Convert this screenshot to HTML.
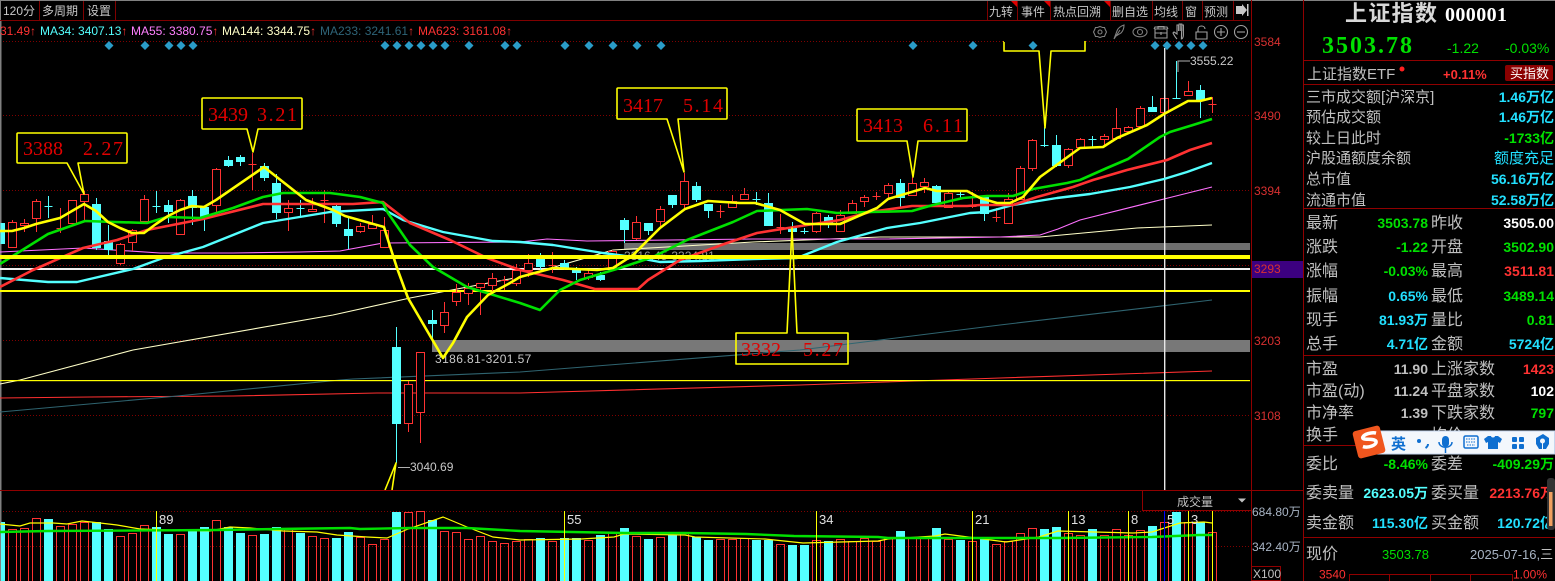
<!DOCTYPE html>
<html><head><meta charset="utf-8"><title>上证指数 000001</title>
<style>
html,body{margin:0;padding:0;background:#000;width:1555px;height:581px;overflow:hidden}
svg{display:block}
text{font-family:"Liberation Sans","WenQuanYi Zen Hei","Noto Sans CJK SC",sans-serif;white-space:pre}
.g{font-size:12px;fill:#c8c8c8}
.ax{font-size:12px;fill:#d83030}
.cb{font-family:"Liberation Serif","Noto Serif CJK SC",serif;font-size:20px;fill:#e00000}
.l{font-size:16px;fill:#c0c0c0}
.v{font-size:14px;font-weight:bold;text-anchor:end}
.c{fill:#22e0ff}.gn{fill:#00e000}.r{fill:#ff3232}.w{fill:#fff}.s{fill:#c0c0c0}
.n{font-size:13px;fill:#e0e0e0}
</style></head><body>
<svg width="1555" height="581" viewBox="0 0 1555 581" xmlns="http://www.w3.org/2000/svg">
<rect width="1555" height="581" fill="#000"/>
<!-- grid -->
<g stroke="#800000" stroke-width="1" stroke-dasharray="1 2" shape-rendering="crispEdges">
<path d="M0 41.5H1250M0 115.5H1250M0 190.5H1250M0 265.5H1250M0 340.5H1250M0 415.5H1250M0 511.5H1250M0 546.5H1250"/>
</g>
<rect x="0" y="0" width="1.5" height="581" fill="#808080"/>
<rect x="0" y="0" width="1555" height="1" fill="#808080"/>
<!-- gray bands -->
<rect x="624" y="243" width="626" height="7" fill="#6e6e6e"/>
<rect x="432" y="340" width="818" height="12" fill="#787878"/>
<text x="624" y="260" class="g" style="fill:#9a9a9a">3316.45-3324.81</text>
<text x="435" y="363" class="g" style="letter-spacing:.4px">3186.81-3201.57</text>
<!-- long MAs -->
<g fill="none" stroke-width="1.1">
<polyline stroke="#ff3030" points="0,398 90,397 233,396 377,393 520,393 800,385 1000,378 1212,371"/>
<polyline stroke="#2f6470" points="0,412 167,397 340,380 353,379 520,372 800,350 1000,325 1212,300"/>
<polyline stroke="#ffffc8" points="0,384 20,380 133,350 333,315 410,298 520,277 613,250 667,247 753,242 880,237 1040,237 1137,228 1212,225"/>
<polyline stroke="#ff70ff" points="0,252 83,248 160,253 233,253 300,252 340,251 383,243 520,242 547,239 587,241 753,239 887,239 1000,237 1040,235 1058,229 1080,220 1164,199 1212,187"/>
</g>
<!-- horizontal lines -->
<rect x="0" y="268" width="1250" height="2" fill="#f0f0f0"/>
<rect x="0" y="290" width="1250" height="2" fill="#ffff00"/>
<rect x="0" y="380" width="1250" height="1.2" fill="#ffff00"/>
<!-- candle wicks -->
<path fill="none" stroke="#ff3232" shape-rendering="crispEdges" d="M12.5 220V248M24.5 219V232M36.5 199V232M60.5 208V233M72.5 200V223M84.5 191V222M120.5 243V265M132.5 229V251M144.5 195V223M180.5 199V235M216.5 168V214M252.5 153V190M288.5 200V231M312.5 198V212M324.5 190V223M360.5 223V233M372.5 215V229M384.5 217V247M408.5 381V432M420.5 352V443M444.5 302V333M456.5 284V306M468.5 283V305M480.5 283V315M492.5 273V295M504.5 276V290M516.5 264V286M528.5 254V277M552.5 252V273M588.5 270V280M612.5 250V270M636.5 216V240M660.5 206V227M684.5 173V208M720.5 205V218M732.5 195V208M744.5 188V200M780.5 214V234M816.5 212V233M840.5 210V232M852.5 200V214M864.5 195V207M876.5 192V200M888.5 183V198M912.5 177V196M924.5 178V193M948.5 192V208M972.5 192V208M996.5 208V222M1008.5 193V224M1020.5 166V200M1032.5 139V171M1068.5 148V168M1080.5 138V148M1104.5 134V147M1116.5 108V140M1128.5 126V133M1140.5 106V127M1164.5 98V117M1188.5 81V95M1212.5 97V113"/>
<path fill="none" stroke="#54ffff" shape-rendering="crispEdges" d="M48.5 196V218M96.5 198V250M108.5 225V255M156.5 191V213M168.5 200V223M192.5 190V225M204.5 206V231M228.5 156V167M240.5 155V166M264.5 163V181M276.5 174V219M300.5 200V217M336.5 204V227M348.5 218V249M396.5 327V463M432.5 310V342M540.5 253V270M564.5 260V270M576.5 267V280M600.5 272V281M624.5 218V243M648.5 223V235M672.5 195V208M696.5 182V202M708.5 204V218M756.5 192V205M768.5 193V225M792.5 222V240M804.5 228V234M828.5 215V228M900.5 179V207M936.5 185V204M960.5 192V198M984.5 197V221M1044.5 127V147M1056.5 135V167M1092.5 136V147M1152.5 96V112M1176.5 61V99M1200.5 85V118"/>
<!-- red bodies -->
<path fill="#000" stroke="#ff3232" shape-rendering="crispEdges" d="M8.5 222.5h8v25h-8zM20.5 223.5h8v2h-8zM32.5 201.5h8v17h-8zM56.5 228.5h8zM68.5 200.5h8v23h-8zM80.5 194.5h8v7h-8zM116.5 244.5h8v19h-8zM128.5 230.5h8v12h-8zM140.5 199.5h8v22h-8zM176.5 200.5h8v34h-8zM212.5 169.5h8v36h-8zM248.5 164.5h8zM284.5 208.5h8v4h-8zM308.5 209.5h8v2h-8zM320.5 200.5h8zM356.5 226.5h8v5h-8zM368.5 224.5h8v4h-8zM380.5 230.5h8v17h-8zM404.5 384.5h8v39h-8zM416.5 352.5h8v60h-8zM440.5 312.5h8v13h-8zM452.5 292.5h8v9h-8zM464.5 288.5h8v5h-8zM476.5 283.5h8v4h-8zM488.5 278.5h8v7h-8zM500.5 280.5h8zM512.5 270.5h8v13h-8zM524.5 263.5h8v7h-8zM548.5 265.5h8zM584.5 273.5h8v4h-8zM608.5 251.5h8v16h-8zM632.5 222.5h8v16h-8zM656.5 209.5h8v12h-8zM680.5 181.5h8v23h-8zM716.5 211.5h8zM728.5 201.5h8v6h-8zM740.5 194.5h8v5h-8zM776.5 227.5h8zM812.5 213.5h8v18h-8zM836.5 215.5h8v16h-8zM848.5 203.5h8v10h-8zM860.5 197.5h8v4h-8zM872.5 196.5h8zM884.5 185.5h8v8h-8zM908.5 183.5h8v12h-8zM920.5 182.5h8v4h-8zM944.5 193.5h8v14h-8zM968.5 206.5h8zM992.5 217.5h8zM1004.5 199.5h8v24h-8zM1016.5 168.5h8v31h-8zM1028.5 140.5h8v28h-8zM1064.5 149.5h8v16h-8zM1076.5 139.5h8v8h-8zM1100.5 136.5h8v3h-8zM1112.5 128.5h8v10h-8zM1124.5 127.5h8v4h-8zM1136.5 108.5h8v18h-8zM1160.5 98.5h8v14h-8zM1184.5 91.5h8v4h-8zM1208.5 104.5h8z"/>
<!-- cyan bodies -->
<path fill="#54ffff" stroke="#54ffff" shape-rendering="crispEdges" d="M1 223.5h3.500v20h-3.500zM44.500 206.500h8zM92.500 204.500h8v43h-8zM104.500 241.500h8v8h-8zM152.500 206.500h8zM164.500 205.500h8v6h-8zM188.500 196.500h8v11h-8zM200.500 207.500h8v10h-8zM224.500 160.500h8v5h-8zM236.500 157.500h8v4h-8zM260.500 166.500h8v11h-8zM272.500 183.500h8v29h-8zM296.500 208.500h8zM332.500 206.500h8v17h-8zM344.500 229.500h8v6h-8zM392.500 347.500h8v76h-8zM428.500 320.500h8v3h-8zM536.500 259.500h8v7h-8zM560.500 263.500h8v4h-8zM572.500 270.500h8v2h-8zM596.500 275.500h8v4h-8zM620.500 220.500h8v9h-8zM644.500 223.500h8v7h-8zM668.500 195.500h8v9h-8zM692.500 186.500h8v13h-8zM704.500 204.500h8v6h-8zM752.500 199.500h8zM764.500 203.500h8v22h-8zM788.500 228.500h8v3h-8zM800.500 231.500h8zM824.500 217.500h8v5h-8zM896.500 183.500h8v14h-8zM932.500 186.500h8v16h-8zM956.500 194.500h8zM980.500 197.500h8v16h-8zM1040.500 145.500h8zM1052.500 145.500h8v20h-8zM1088.500 139.500h8zM1148.500 107.500h8v4h-8zM1172.500 98.500h8zM1196.500 90.500h8v10h-8z"/>
<!-- white cursor -->
<rect x="1164" y="48" width="1.4" height="442" fill="#e8e8e8"/>
<!-- MAs -->
<g fill="none" stroke-linejoin="round">
<polyline stroke="#54ffff" stroke-width="2.400" points="0,278 48,282 77,282 133,269 163,258 203,247 263,223 330,212 383,209 403,220 443,232 493,241 520,242 553,245 603,253 633,257 660,262 700,261 753,259 797,258 837,242 887,228 920,223 970,213 987,212 1013,205 1057,198 1090,194 1130,187 1164,179 1187,172 1212,163"/>
<polyline stroke="#ff3232" stroke-width="2.600" points="0,287 33,270 83,248 117,240 147,230 203,219 263,204 353,204 383,202 410,223 450,240 487,258 520,270 563,280 595,289 638,289 648,280 680,260 727,243 757,233 807,225 840,220 870,212 912,206 967,206 980,205 1013,205 1037,197 1073,187 1093,180 1127,170 1167,160 1190,150 1212,143"/>
<polyline stroke="#00e000" stroke-width="2.600" points="0,264 48,234 85,221 147,223 167,217 200,218 233,208 263,197 283,193 330,193 360,197 383,203 388,213 410,245 433,267 467,287 520,303 540,310 560,290 580,280 620,268 653,257 687,240 733,222 757,211 807,209 837,213 870,212 912,211 933,205 963,198 987,196 1013,196 1033,189 1067,183 1080,180 1107,168 1128,159 1160,137 1170,132 1193,125 1212,119"/>
<polyline stroke="#ffff00" stroke-width="2.600" points="0,231 12,231 24,228 36,224 60,218 84,204 96,211 108,222 120,228 132,233 144,233 156,224 168,216 180,210 192,206 204,207 216,200 264,167 306,200 333,210 345,216 384,227 388,240 397,268 408,298 443,358 453,343 467,317 488,295 510,283 520,277 553,268 597,270 613,268 633,255 660,228 685,209 708,201 740,203 755,203 780,210 805,224 840,224 877,208 888,199 925,188 937,191 967,191 980,198 997,203 1010,203 1023,197 1040,177 1080,148 1103,147 1117,138 1147,125 1164,114 1188,101 1200,101 1212,98"/>
</g>
<!-- thick yellow -->
<rect x="0" y="255" width="1250" height="4" fill="#ffff00"/>
<!-- callouts -->
<g fill="none" stroke="#ffff00" stroke-width="1.600" stroke-linejoin="round">
<path d="M19 133H126a1 1 0 0 1 1 1V162a1 1 0 0 1-1 1H78L84 194L67 163H18a1 1 0 0 1-1-1V134a1 1 0 0 1 1-1z" fill="#000"/>
<path d="M204 98H301a1 1 0 0 1 1 1V128a1 1 0 0 1-1 1H258L253 152L247 129H203a1 1 0 0 1-1-1V99a1 1 0 0 1 1-1z" fill="#000"/>
<path d="M619 88H726a1 1 0 0 1 1 1V118a1 1 0 0 1-1 1H678L684 172L667 119H618a1 1 0 0 1-1-1V89a1 1 0 0 1 1-1z" fill="#000"/>
<path d="M859 109H966a1 1 0 0 1 1 1V140a1 1 0 0 1-1 1H918L913 177L907 141H858a1 1 0 0 1-1-1V110a1 1 0 0 1 1-1z" fill="#000"/>
<path d="M1004 41V51H1039L1045 128L1051 51H1085V41"/>
<path d="M737 333H787L792 228L797 333H848V364H736V333z"/>
<path d="M385 490L396 463L392 490"/>
</g>
<rect x="1004" y="41" width="80" height="1" fill="#000"/>
<text x="23" y="155" class="cb" textLength="40">3388</text><text x="83" y="155" class="cb" textLength="40">2.27</text>
<text x="208" y="121" class="cb" textLength="40">3439</text><text x="257" y="121" class="cb" textLength="40">3.21</text>
<text x="623" y="112" class="cb" textLength="40">3417</text><text x="683" y="112" class="cb" textLength="40">5.14</text>
<text x="863" y="132" class="cb" textLength="40">3413</text><text x="923" y="132" class="cb" textLength="40">6.11</text>
<text x="741" y="356" class="cb" textLength="40">3332</text><text x="803" y="356" class="cb" textLength="40">5.27</text>
<!-- high low labels -->
<path d="M1178 72V61H1190" fill="none" stroke="#b0b0b0" shape-rendering="crispEdges"/>
<text x="1190" y="65" class="g">3555.22</text>
<path d="M398 467.500H410" stroke="#b0b0b0" shape-rendering="crispEdges"/>
<text x="410" y="471" class="g">3040.69</text>
<!-- diamonds -->
<g fill="#2a9cc8">
<path d="M109 41l4.500 4.500l-4.500 4.500l-4.500-4.500zM145 41l4.500 4.500l-4.500 4.500l-4.500-4.500zM169 41l4.500 4.500l-4.500 4.500l-4.500-4.500zM181 41l4.500 4.500l-4.500 4.500l-4.500-4.500zM193 41l4.500 4.500l-4.500 4.500l-4.500-4.500zM385 41l4.500 4.500l-4.500 4.500l-4.500-4.500zM397 41l4.500 4.500l-4.500 4.500l-4.500-4.500zM409 41l4.500 4.500l-4.500 4.500l-4.500-4.500zM421 41l4.500 4.500l-4.500 4.500l-4.500-4.500zM433 41l4.500 4.500l-4.500 4.500l-4.500-4.500zM445 41l4.500 4.500l-4.500 4.500l-4.500-4.500zM469 41l4.500 4.500l-4.500 4.500l-4.500-4.500zM505 41l4.500 4.500l-4.500 4.500l-4.500-4.500zM517 41l4.500 4.500l-4.500 4.500l-4.500-4.500zM565 41l4.500 4.500l-4.500 4.500l-4.500-4.500zM589 41l4.500 4.500l-4.500 4.500l-4.500-4.500zM613 41l4.500 4.500l-4.500 4.500l-4.500-4.500zM637 41l4.500 4.500l-4.500 4.500l-4.500-4.500zM661 41l4.500 4.500l-4.500 4.500l-4.500-4.500zM913 41l4.500 4.500l-4.500 4.500l-4.500-4.500zM973 41l4.500 4.500l-4.500 4.500l-4.500-4.500zM1033 41l4.500 4.500l-4.500 4.500l-4.500-4.500zM1155 41l4.500 4.500l-4.500 4.500l-4.500-4.500zM1167 41l4.500 4.500l-4.500 4.500l-4.500-4.500zM1179 41l4.500 4.500l-4.500 4.500l-4.500-4.500zM1191 41l4.500 4.500l-4.500 4.500l-4.500-4.500zM1203 41l4.500 4.500l-4.500 4.500l-4.500-4.500z"/>
</g>
<!-- header area -->
<rect x="0" y="20" width="1250" height="1" fill="#800000"/>
<rect x="1" y="1" width="1250" height="19" fill="#000"/>
<g fill="none" stroke="#800000" shape-rendering="crispEdges"><path d="M39.500 1V20M83.500 1V20M115.500 1V20M987.500 1V20M1017.500 1V20M1050.500 1V20M1110.500 1V20M1152.500 1V20M1182.500 1V20M1202.500 1V20M1233.500 1V20"/></g>
<g><text x="3" y="15" style="fill:#c8c8c8;font-size:12px">120分</text><text x="42" y="15" style="fill:#c8c8c8;font-size:12px">多周期</text><text x="87" y="15" style="fill:#c8c8c8;font-size:12px">设置</text>
<text x="989" y="16" style="fill:#c8c8c8;font-size:12px">九转</text><text x="1021" y="16" style="fill:#c8c8c8;font-size:12px">事件</text><text x="1053" y="16" style="fill:#c8c8c8;font-size:12px">热点回溯</text><text x="1112" y="16" style="fill:#c8c8c8;font-size:12px">删自选</text><text x="1154" y="16" style="fill:#c8c8c8;font-size:12px">均线</text><text x="1185" y="16" style="fill:#c8c8c8;font-size:12px">窗</text><text x="1204" y="16" style="fill:#c8c8c8;font-size:12px">预测</text></g>
<path d="M1011 1h6v6zM1044 1h6v6zM1104 1h6v6z" fill="#e00000"/>
<path d="M1236 6h6v8h-6zM1242 4l5 6l-5 6z" fill="#c8c8c8"/><rect x="1247" y="4" width="1.500" height="12" fill="#c8c8c8"/>
<!-- MA legend -->
<g>
<text x="0" y="35" style="font-size:12px;fill:#ff3232">31.49↑</text>
<text x="40" y="35" style="font-size:12px;fill:#54ffff">MA34: 3407.13<tspan style="fill:#ff3232">↑</tspan></text>
<text x="131" y="35" style="font-size:12px;fill:#ff80ff">MA55: 3380.75<tspan style="fill:#ff3232">↑</tspan></text>
<text x="222" y="35" style="font-size:12px;fill:#ffffc8">MA144: 3344.75<tspan style="fill:#ff3232">↑</tspan></text>
<text x="320" y="35" style="font-size:12px;fill:#2e6478">MA233: 3241.61<tspan style="fill:#ff3232">↑</tspan></text>
<text x="418" y="35" style="font-size:12px;fill:#ff3232">MA623: 3161.08<tspan style="fill:#ff3232">↑</tspan></text>
</g>
<!-- icons -->
<g fill="none" stroke="#808080" stroke-width="1.100">
<circle cx="1100" cy="32" r="2"/><path d="M1100 26.500l2.500 1l2 0l1 2.500l1 2l-1 2l-1 2.500l-2 0l-2.500 1l-2.500-1l-2 0l-1-2.500l-1-2l1-2l1-2.500l2 0z"/>
<path d="M1114 39l3-8c1-3 4-5 7-6c0 3-1 6-3 8l-5 3zM1114 39l6-9"/>
<ellipse cx="1140" cy="32" rx="7" ry="4.800"/><circle cx="1140" cy="32" r="2.500"/>
<path d="M1155 29h12v9h-12zM1155 33h12M1158 29v-2.500h6V29M1161 32v3M1154 29l1-2h12l1 2" stroke="#989898"/>
<path d="M1177 39c-2-2-3-4-4-6l1-1 3 2v-9h1.600v6m0-7h1.600v7m0-7h1.600v7m0-6h1.600v10c0 2-1 4-2 4z" stroke="#a0a0a0"/>
<path d="M1196 32h11v7h-11zM1198 32v-3c0-4 7-4 7 0" stroke="#a0a0a0"/>
<circle cx="1221" cy="32" r="6.500" stroke="#a0a0a0"/><path d="M1217 32h8M1221 28v8" stroke="#a0a0a0"/>
<circle cx="1241" cy="32" r="6.500" stroke="#a0a0a0"/><path d="M1237 32h8" stroke="#a0a0a0"/>
</g>
<!-- axis -->
<rect x="0" y="490" width="1303" height="1" fill="#900000"/>
<rect x="1251" y="0" width="1" height="581" fill="#900000"/>
<rect x="1303" y="0" width="1" height="581" fill="#900000"/>
<text x="1254" y="46" class="ax">3584</text>
<text x="1254" y="120" class="ax">3490</text>
<text x="1254" y="195" class="ax">3394</text>
<rect x="1252" y="261" width="51" height="17" fill="#3c0080"/>
<text x="1254" y="273" class="ax">3293</text>
<text x="1254" y="345" class="ax">3203</text>
<text x="1254" y="420" class="ax">3108</text>
<text x="1252" y="516" style="font-size:12px;fill:#a8b4c4">684.80万</text>
<text x="1252" y="551" style="font-size:12px;fill:#a8b4c4">342.40万</text>
<rect x="1251.500" y="566.500" width="29" height="14" fill="none" stroke="#900000"/>
<text x="1253" y="578" style="font-size:12px;fill:#c0c0c0">X100</text>
<!-- volume box -->
<path d="M1142.500 491V510.500H1251" fill="none" stroke="#900000" shape-rendering="crispEdges"/>
<text x="1177" y="506" style="font-size:12px;fill:#c0c0c0">成交量</text>
<path d="M1238 498.500h8l-4 4z" fill="#c0c0c0"/>
<!-- volume bars -->
<path fill="#54ffff" d="M1 522h4V581h-4zM44 519h9V581h-9zM92 522h9V581h-9zM104 529h9V581h-9zM152 527h9V581h-9zM164 534h9V581h-9zM188 529h9V581h-9zM200 527h9V581h-9zM224 527h9V581h-9zM236 533h9V581h-9zM260 534h9V581h-9zM272 527h9V581h-9zM296 533h9V581h-9zM332 538h9V581h-9zM344 532h9V581h-9zM392 512h9V581h-9zM428 520h9V581h-9zM536 538h9V581h-9zM560 538h9V581h-9zM572 538h9V581h-9zM596 535h9V581h-9zM620 528h9V581h-9zM644 539h9V581h-9zM668 535h9V581h-9zM692 537h9V581h-9zM704 540h9V581h-9zM752 540h9V581h-9zM764 540h9V581h-9zM788 545h9V581h-9zM800 545h9V581h-9zM824 541h9V581h-9zM896 531h9V581h-9zM932 528h9V581h-9zM956 540h9V581h-9zM980 539h9V581h-9zM1040 529h9V581h-9zM1052 527h9V581h-9zM1088 529h9V581h-9zM1148 526h9V581h-9zM1172 512h9V581h-9zM1196 522h9V581h-9z"/>
<path fill="none" stroke="#ff3232" shape-rendering="crispEdges" d="M8.500 581V529.500h8V581M20.500 581V528.500h8V581M32.500 581V518.500h8V581M56.500 581V526.500h8V581M68.500 581V524.500h8V581M80.500 581V522.500h8V581M116.500 581V536.500h8V581M128.500 581V533.500h8V581M140.500 581V525.500h8V581M176.500 581V534.500h8V581M212.500 581V520.500h8V581M248.500 581V535.500h8V581M284.500 581V529.500h8V581M308.500 581V536.500h8V581M320.500 581V538.500h8V581M356.500 581V537.500h8V581M368.500 581V544.500h8V581M380.500 581V539.500h8V581M404.500 581V512.500h8V581M416.500 581V511.500h8V581M440.500 581V531.500h8V581M452.500 581V532.500h8V581M464.500 581V539.500h8V581M476.500 581V536.500h8V581M488.500 581V541.500h8V581M500.500 581V543.500h8V581M512.500 581V541.500h8V581M524.500 581V539.500h8V581M548.500 581V541.500h8V581M584.500 581V540.500h8V581M608.500 581V532.500h8V581M632.500 581V536.500h8V581M656.500 581V537.500h8V581M680.500 581V532.500h8V581M716.500 581V539.500h8V581M728.500 581V539.500h8V581M740.500 581V538.500h8V581M776.500 581V544.500h8V581M812.500 581V540.500h8V581M836.500 581V539.500h8V581M848.500 581V541.500h8V581M860.500 581V538.500h8V581M872.500 581V541.500h8V581M884.500 581V537.500h8V581M908.500 581V537.500h8V581M920.500 581V538.500h8V581M944.500 581V539.500h8V581M968.500 581V541.500h8V581M992.500 581V544.500h8V581M1004.500 581V541.500h8V581M1016.500 581V533.500h8V581M1028.500 581V528.500h8V581M1064.500 581V533.500h8V581M1076.500 581V535.500h8V581M1100.500 581V535.500h8V581M1112.500 581V529.500h8V581M1124.500 581V535.500h8V581M1136.500 581V530.500h8V581M1160.500 581V522.500h8V581M1184.500 581V522.500h8V581M1208.500 581V532.500h8V581"/>
<!-- volume MAs -->
<polyline fill="none" stroke="#ffff00" stroke-width="1.200" points="0,524 20,526 30,523 53,523 67,524 82,521 100,523 117,525 140,529 167,530 210,531 230,527 250,528 283,531 317,532 337,535 367,537 387,538 408,529 443,517 467,527 493,537 520,540 581,539 614,537 624,534 685,535 695,537 765,539 803,543 878,541 888,539 935,536 945,534 968,537 1006,542 1039,537 1058,531 1095,532 1133,533 1152,532 1180,523 1204,522 1212,523"/>
<polyline fill="none" stroke="#00e000" stroke-width="2.400" points="0,532 48,531 217,530 277,529 350,528 360,529 410,528 467,528 520,531 624,533 685,533 746,534 794,536 878,537 888,538 1058,538 1152,537 1199,535 1212,535"/>
<!-- fib lines -->
<path stroke="#ffff00" shape-rendering="crispEdges" d="M156.500 511V581M564.500 511V581M816.500 511V581M972.500 511V581M1068.500 511V581M1128.500 511V581M1188.500 511V581M1212.500 511V581"/>
<path stroke="#0000ff" shape-rendering="crispEdges" d="M1164.500 511V581"/>
<text x="159" y="524" class="n">89</text><text x="567" y="524" class="n">55</text><text x="819" y="524" class="n">34</text><text x="975" y="524" class="n">21</text><text x="1071" y="524" class="n">13</text><text x="1131" y="524" class="n">8</text><text x="1167" y="524" class="n">5</text><text x="1191" y="524" class="n">3</text>
<!-- right panel -->
<text x="1345" y="21" style="font-size:22px;font-weight:bold;fill:#d8d8d8" textLength="92">上证指数</text>
<text x="1445" y="21" style="font-size:20px;font-weight:bold;fill:#fff;font-family:'Liberation Serif',serif" textLength="62">000001</text>
<text x="1322" y="53" style="font-size:24px;font-weight:bold;fill:#00e000;font-family:'Liberation Serif',serif" textLength="90">3503.78</text>
<text x="1447" y="53" style="font-size:14px;fill:#00e000">-1.22</text>
<text x="1505" y="53" style="font-size:14px;fill:#00e000">-0.03%</text>
<rect x="1304" y="60" width="251" height="1" fill="#900000"/>
<text x="1307" y="79" class="l" style="font-size:15px">上证指数ETF</text>
<circle cx="1402" cy="69" r="2.500" fill="#ff2020"/>
<text x="1443" y="79" style="font-size:13px;font-weight:bold;fill:#ff3232">+0.11%</text>
<rect x="1505" y="65" width="48" height="16" rx="2" fill="#8b0000"/>
<text x="1510" y="78" style="font-size:13px;fill:#fff">买指数</text>
<rect x="1304" y="84" width="251" height="1" fill="#900000"/>
<text x="1306" y="102" class="l" style="font-size:15px">三市成交额[沪深京]</text><text x="1554" y="102" class="v c">1.46万亿</text>
<text x="1306" y="122" class="l" style="font-size:15px">预估成交额</text><text x="1554" y="122" class="v c">1.46万亿</text>
<text x="1306" y="143" class="l" style="font-size:15px">较上日此时</text><text x="1554" y="143" class="v gn">-1733亿</text>
<text x="1306" y="163" class="l" style="font-size:15px">沪股通额度余额</text><text x="1554" y="163" class="v c" style="font-weight:normal;font-size:15px">额度充足</text>
<text x="1306" y="184" class="l" style="font-size:15px">总市值</text><text x="1554" y="184" class="v c">56.16万亿</text>
<text x="1306" y="205" class="l" style="font-size:15px">流通市值</text><text x="1554" y="205" class="v c">52.58万亿</text>
<rect x="1304" y="208" width="251" height="1" fill="#900000"/>
<!-- quote table -->
<text x="1306" y="228" class="l">最新</text><text x="1428" y="228" class="v gn">3503.78</text><text x="1431" y="228" class="l">昨收</text><text x="1554" y="228" class="v w">3505.00</text>
<text x="1306" y="252" class="l">涨跌</text><text x="1428" y="252" class="v gn">-1.22</text><text x="1431" y="252" class="l">开盘</text><text x="1554" y="252" class="v gn">3502.90</text>
<text x="1306" y="276" class="l">涨幅</text><text x="1428" y="276" class="v gn">-0.03%</text><text x="1431" y="276" class="l">最高</text><text x="1554" y="276" class="v r">3511.81</text>
<text x="1306" y="301" class="l">振幅</text><text x="1428" y="301" class="v c">0.65%</text><text x="1431" y="301" class="l">最低</text><text x="1554" y="301" class="v gn">3489.14</text>
<text x="1306" y="325" class="l">现手</text><text x="1428" y="325" class="v c">81.93万</text><text x="1431" y="325" class="l">量比</text><text x="1554" y="325" class="v gn">0.81</text>
<text x="1306" y="349" class="l">总手</text><text x="1428" y="349" class="v c">4.71亿</text><text x="1431" y="349" class="l">金额</text><text x="1554" y="349" class="v c">5724亿</text>
<rect x="1304" y="355" width="251" height="1" fill="#900000"/>
<text x="1306" y="374" class="l">市盈</text><text x="1428" y="374" class="v s">11.90</text><text x="1431" y="374" class="l">上涨家数</text><text x="1554" y="374" class="v r">1423</text>
<text x="1306" y="396" class="l">市盈(动)</text><text x="1428" y="396" class="v s">11.24</text><text x="1431" y="396" class="l">平盘家数</text><text x="1554" y="396" class="v w">102</text>
<text x="1306" y="418" class="l">市净率</text><text x="1428" y="418" class="v s">1.39</text><text x="1431" y="418" class="l">下跌家数</text><text x="1554" y="418" class="v gn">797</text>
<text x="1306" y="440" class="l">换手</text><text x="1428" y="440" class="v c">1.00%</text><text x="1431" y="440" class="l">均价</text><text x="1554" y="440" class="v gn">00.00</text>
<rect x="1304" y="445" width="251" height="1" fill="#900000"/>
<text x="1306" y="469" class="l">委比</text><text x="1428" y="469" class="v gn">-8.46%</text><text x="1431" y="469" class="l">委差</text><text x="1554" y="469" class="v gn">-409.29万</text>
<text x="1306" y="498" class="l">委卖量</text><text x="1428" y="498" class="v" style="fill:#54ffff">2623.05万</text><text x="1431" y="498" class="l">委买量</text><text x="1554" y="498" class="v r">2213.76万</text>
<text x="1306" y="528" class="l">卖金额</text><text x="1428" y="528" class="v c">115.30亿</text><text x="1431" y="528" class="l">买金额</text><text x="1554" y="528" class="v c">120.72亿</text>
<rect x="1304" y="537" width="251" height="1" fill="#900000"/>
<text x="1306" y="559" class="l">现价</text>
<text x="1382" y="559" style="font-size:13px;fill:#00e000">3503.78</text>
<text x="1470" y="559" style="font-size:13px;fill:#a8b4c4">2025-07-16,<tspan style="fill:#c0c0c0">三</tspan></text>
<text x="1319" y="578.500" style="font-size:12px;fill:#ff3232">3540</text>
<path d="M1349.500 581V574.500H1512.500V581M1389.500 575V581M1430.500 575V581M1470.500 575V581" fill="none" stroke="#900000" shape-rendering="crispEdges"/>
<text x="1513" y="578.500" style="font-size:12px;fill:#ff3232">1.00%</text>
<!-- scrollbar -->
<rect x="1547" y="478" width="8" height="52" rx="3" fill="#333"/>
<rect x="1549" y="492" width="3.500" height="34" fill="#f0a060"/>
<!-- IME bar -->
<rect x="1375" y="431" width="179.500" height="23" fill="#f3f7fc" stroke="#c5d6ee"/>
<g transform="rotate(-14 1369 442)"><rect x="1355" y="428" width="28" height="28" rx="3" fill="#f0561e"/>
<path d="M1378 435c-4-2-12-2-14 1c-2 3 11 3 12 7c0 4-9 5-14 2" fill="none" stroke="#fff" stroke-width="3.500"/></g>
<text x="1391" y="449" style="font-size:15px;font-weight:bold;fill:#0f6fd0;font-family:'Noto Sans CJK SC',sans-serif">英</text>
<circle cx="1419" cy="441" r="2" fill="#0f6fd0"/>
<path d="M1428 444c0 2-1 3-2.500 4" stroke="#0f6fd0" stroke-width="2" fill="none"/>
<rect x="1442" y="436" width="7" height="11" rx="3.500" fill="#0f6fd0"/>
<path d="M1439 442c0 7 13 7 13 0M1445.500 448v5" stroke="#0f6fd0" stroke-width="1.500" fill="none"/>
<rect x="1464" y="436" width="14" height="12" rx="1.500" fill="#f3f7fc" stroke="#0f6fd0" stroke-width="1.500"/>
<path d="M1466 439h10M1466 442h10M1467 445h8" stroke="#0f6fd0" stroke-dasharray="1.500 1"/>
<path d="M1491 436h-3l-4 3l2 4l2-1v7h10v-7l2 1l2-4l-4-3h-3c0 2-4 2-4 0z" fill="#0f6fd0"/>
<rect x="1512" y="437" width="5" height="5" rx="1" fill="#0f6fd0"/><rect x="1519" y="437" width="5" height="5" rx="1" fill="#0f6fd0"/><rect x="1512" y="444" width="5" height="5" rx="1" fill="#0f6fd0"/><rect x="1519" y="444" width="5" height="5" rx="1" fill="#0f6fd0"/>
<path d="M1543 434l6 4v6l-3 5h-7l-3-5v-6z" fill="#0f6fd0"/><circle cx="1542.500" cy="441" r="2.500" fill="#f3f7fc"/><path d="M1542.500 443v6" stroke="#f3f7fc"/>
</svg>
</body></html>
